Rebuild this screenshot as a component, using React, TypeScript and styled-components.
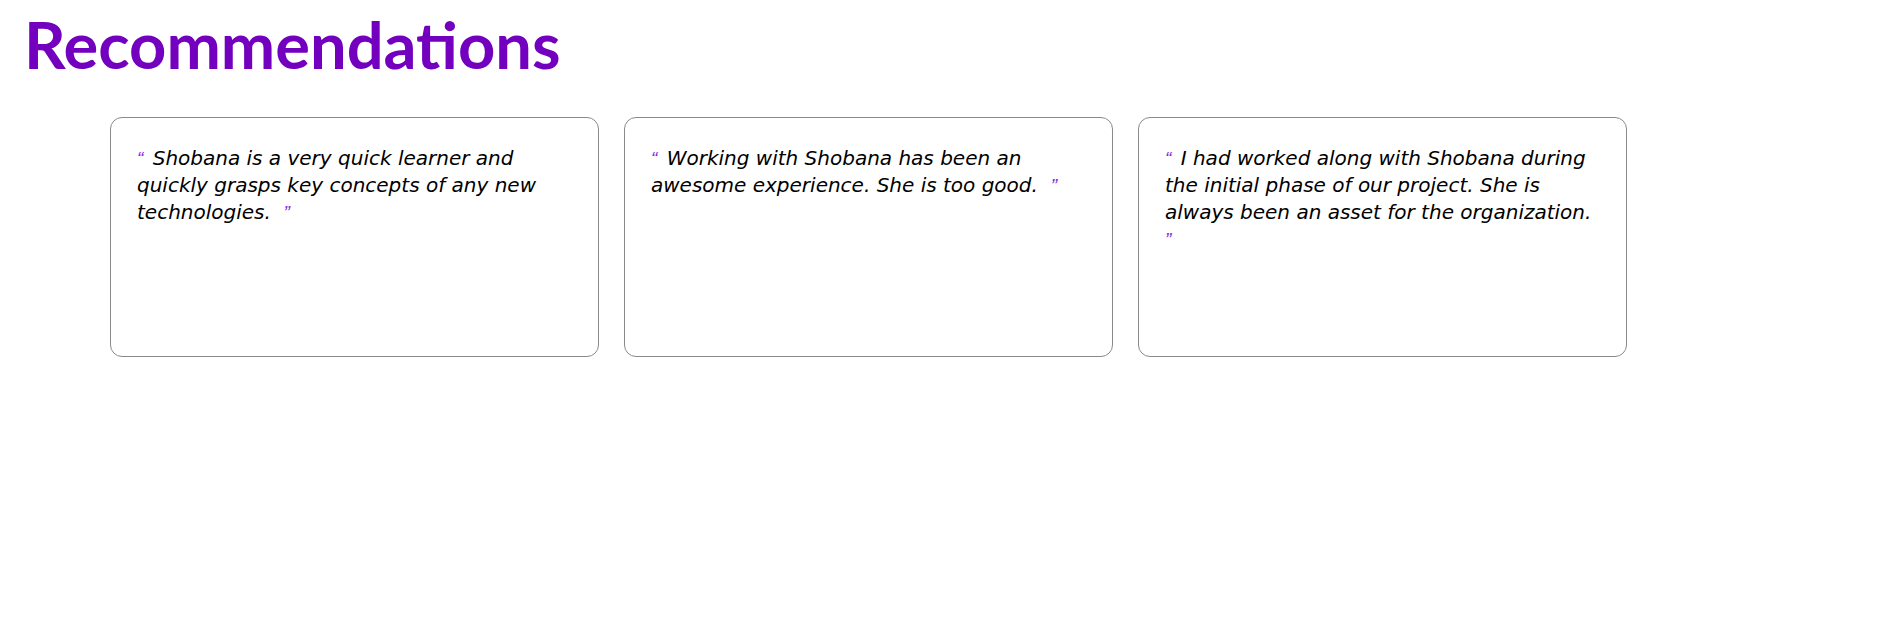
import React from "react";
import styled, { createGlobalStyle } from "styled-components";

const GlobalStyle = createGlobalStyle`
  html, body {
    margin: 0;
    padding: 0;
    background: #ffffff;
  }
  body {
    margin: 8px;
    font-family: "DejaVu Sans", "Liberation Sans", sans-serif;
  }
`;

const Page = styled.div`
  display: flex;
  flex-direction: column;
`;

const Title = styled.h1`
  margin: 0 0 37px 16px;
  font-family: "Lato", "DejaVu Sans", sans-serif;
  font-weight: 700;
  font-size: 65px;
  line-height: 72px;
  color: #7400bf;
`;

const CardRow = styled.div`
  display: flex;
  gap: 25px;
  padding-left: 102px;
`;

const Card = styled.div`
  box-sizing: border-box;
  width: 489px;
  height: 240px;
  padding: 27px 26px 25px;
  border: 1px solid #8a8a8a;
  border-radius: 12px;
  background: #ffffff;
`;

const Text = styled.p`
  margin: 0;
  font-family: "DejaVu Sans", sans-serif;
  font-style: italic;
  font-size: 20px;
  line-height: 27px;
  color: #000000;
`;

const Quote = styled.span<{ $open?: boolean }>`
  font-family: "Liberation Sans", sans-serif;
  font-size: 19px;
  color: #8a2be2;
  margin-right: ${(p) => (p.$open ? "3px" : "0")};
`;

const recommendations = [
  "Shobana is a very quick learner and quickly grasps key concepts of any new technologies.",
  "Working with Shobana has been an awesome experience. She is too good.",
  "I had worked along with Shobana during the initial phase of our project. She is always been an asset for the organization.",
];

export default function App() {
  return (
    <>
      <GlobalStyle />
      <Page>
        <Title>Recommendations</Title>
        <CardRow>
          {recommendations.map((r) => (
            <Card key={r}>
              <Text>
                <Quote $open>“</Quote> {r}&nbsp; <Quote>”</Quote>
              </Text>
            </Card>
          ))}
        </CardRow>
      </Page>
    </>
  );
}
